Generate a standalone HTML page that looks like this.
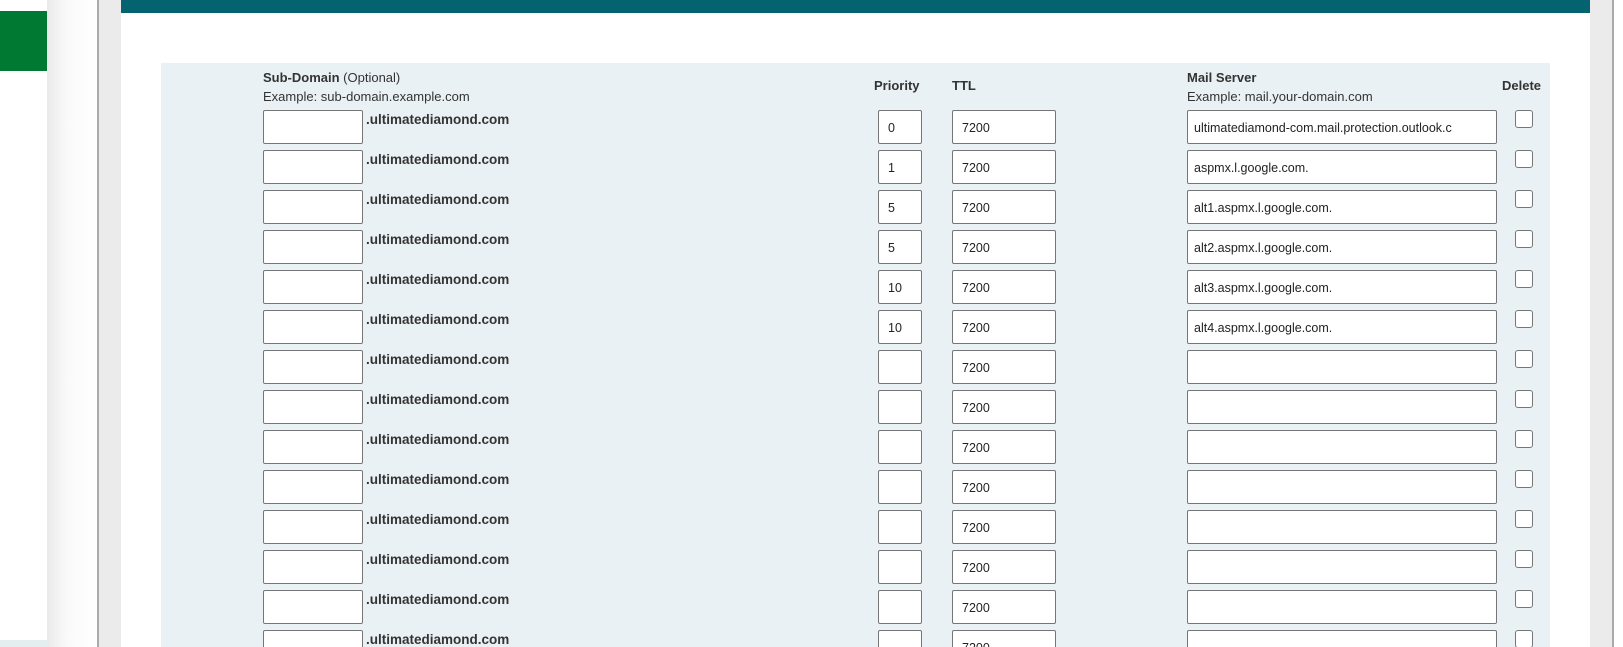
<!DOCTYPE html>
<html style="width:1623px;height:647px;overflow:hidden"><head><meta charset="utf-8"><style>
*{margin:0;padding:0;box-sizing:border-box}
body{width:1623px;height:647px;overflow:hidden;background:#ebebeb;font-family:"Liberation Sans",Arial,sans-serif;color:#333;position:relative}
.abs{position:absolute}
.in{position:absolute;background:#fff;border:1px solid #767676;border-radius:2px;height:34px;font-size:12.5px;padding-left:9px;line-height:32px;color:#222;white-space:nowrap;overflow:hidden}
.cb{position:absolute;width:18px;height:18px;border:1px solid #767676;border-radius:3px;background:#fff}
.dom{position:absolute;font-size:13.5px;font-weight:bold;color:#333}
</style></head><body>
<div class="abs" style="left:0;top:0;width:47px;height:647px;background:#fff"></div>
<div class="abs" style="left:0;top:11px;width:47px;height:60px;background:#007a33"></div>
<div class="abs" style="left:0;top:640px;width:47px;height:7px;background:#e4eeee"></div>
<div class="abs" style="left:47px;top:0;width:51px;height:647px;background:linear-gradient(90deg,#eaeaea,#fafafa 40%,#fff)"></div>
<div class="abs" style="left:97px;top:0;width:2px;height:647px;background:#aaa"></div>
<div class="abs" style="left:121px;top:0;width:1469px;height:647px;background:#fff"></div>
<div class="abs" style="left:121px;top:0;width:1469px;height:13px;background:#03636f"></div>
<div class="abs" style="left:1612px;top:0;width:2px;height:647px;background:#aaa"></div>
<div class="abs" style="left:1614px;top:0;width:9px;height:647px;background:#fff"></div>
<div class="abs" style="left:161px;top:63px;width:1389px;height:584px;background:#eaf1f4"></div>
<div class="abs" style="left:263px;top:68px;font-size:13px;line-height:19px"><b>Sub-Domain</b> (Optional)<br>Example: sub-domain.example.com</div>
<div class="abs" style="left:874px;top:78px;font-size:13px;font-weight:bold">Priority</div>
<div class="abs" style="left:952px;top:78px;font-size:13px;font-weight:bold">TTL</div>
<div class="abs" style="left:1187px;top:68px;font-size:13px;line-height:19px"><b>Mail Server</b><br>Example: mail.your-domain.com</div>
<div class="abs" style="left:1502px;top:78px;font-size:13px;font-weight:bold">Delete</div>
<div id="rows"></div>
<script>
var p=["0","1","5","5","10","10","","","","","","","",""];
var m=["ultimatediamond-com.mail.protection.outlook.c","aspmx.l.google.com.","alt1.aspmx.l.google.com.","alt2.aspmx.l.google.com.","alt3.aspmx.l.google.com.","alt4.aspmx.l.google.com.","","","","","","","",""];
var h="";
for(var i=0;i<14;i++){var y=110+i*40;
h+='<div class="in" style="left:263px;top:'+y+'px;width:100px"></div>';
h+='<div class="dom" style="left:366px;top:'+(y+2)+'px">.ultimatediamond.com</div>';
h+='<div class="in" style="left:878px;top:'+y+'px;width:44px;line-height:34px">'+p[i]+'</div>';
h+='<div class="in" style="left:952px;top:'+y+'px;width:104px;line-height:34px">7200</div>';
h+='<div class="in" style="left:1187px;top:'+y+'px;width:310px;padding-left:6px;line-height:34px">'+m[i]+'</div>';
h+='<div class="cb" style="left:1515px;top:'+y+'px"></div>';}
document.getElementById("rows").innerHTML=h;
</script>
</body></html>
